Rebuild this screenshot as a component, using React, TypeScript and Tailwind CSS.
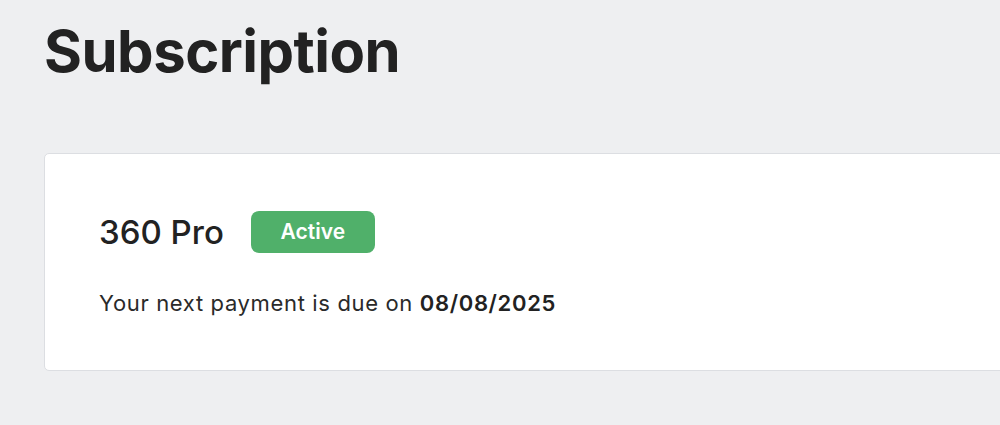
export default function App() {
  return (
    <div className="min-h-screen w-[1000px] overflow-hidden bg-[#eeeff1] font-['Inter',sans-serif] text-[#222222]">
      <div className="pl-[44px] pt-[16px]">
        <h1 className="text-[58px] font-bold leading-[70px] tracking-[-0.5px]">Subscription</h1>

        <div className="mt-[67px] w-[1000px] rounded-[5px] border border-[#dcdee2] bg-white px-[54px] pb-[53px] pt-[57px]">
          <div className="flex items-center gap-[27px]">
            <span className="text-[33px] font-medium leading-[42px]">360 Pro</span>
            <span className="flex h-[42px] w-[124px] items-center justify-center rounded-[8px] bg-[#50b06a] text-[21px] font-semibold text-white">
              Active
            </span>
          </div>
          <p className="mt-[36px] text-[22px] leading-[28px] tracking-[0.65px] text-[#2a2a2a]">
            Your next payment is due on <span className="font-semibold text-[#222222]">08/08/2025</span>
          </p>
        </div>
      </div>
    </div>
  );
}
